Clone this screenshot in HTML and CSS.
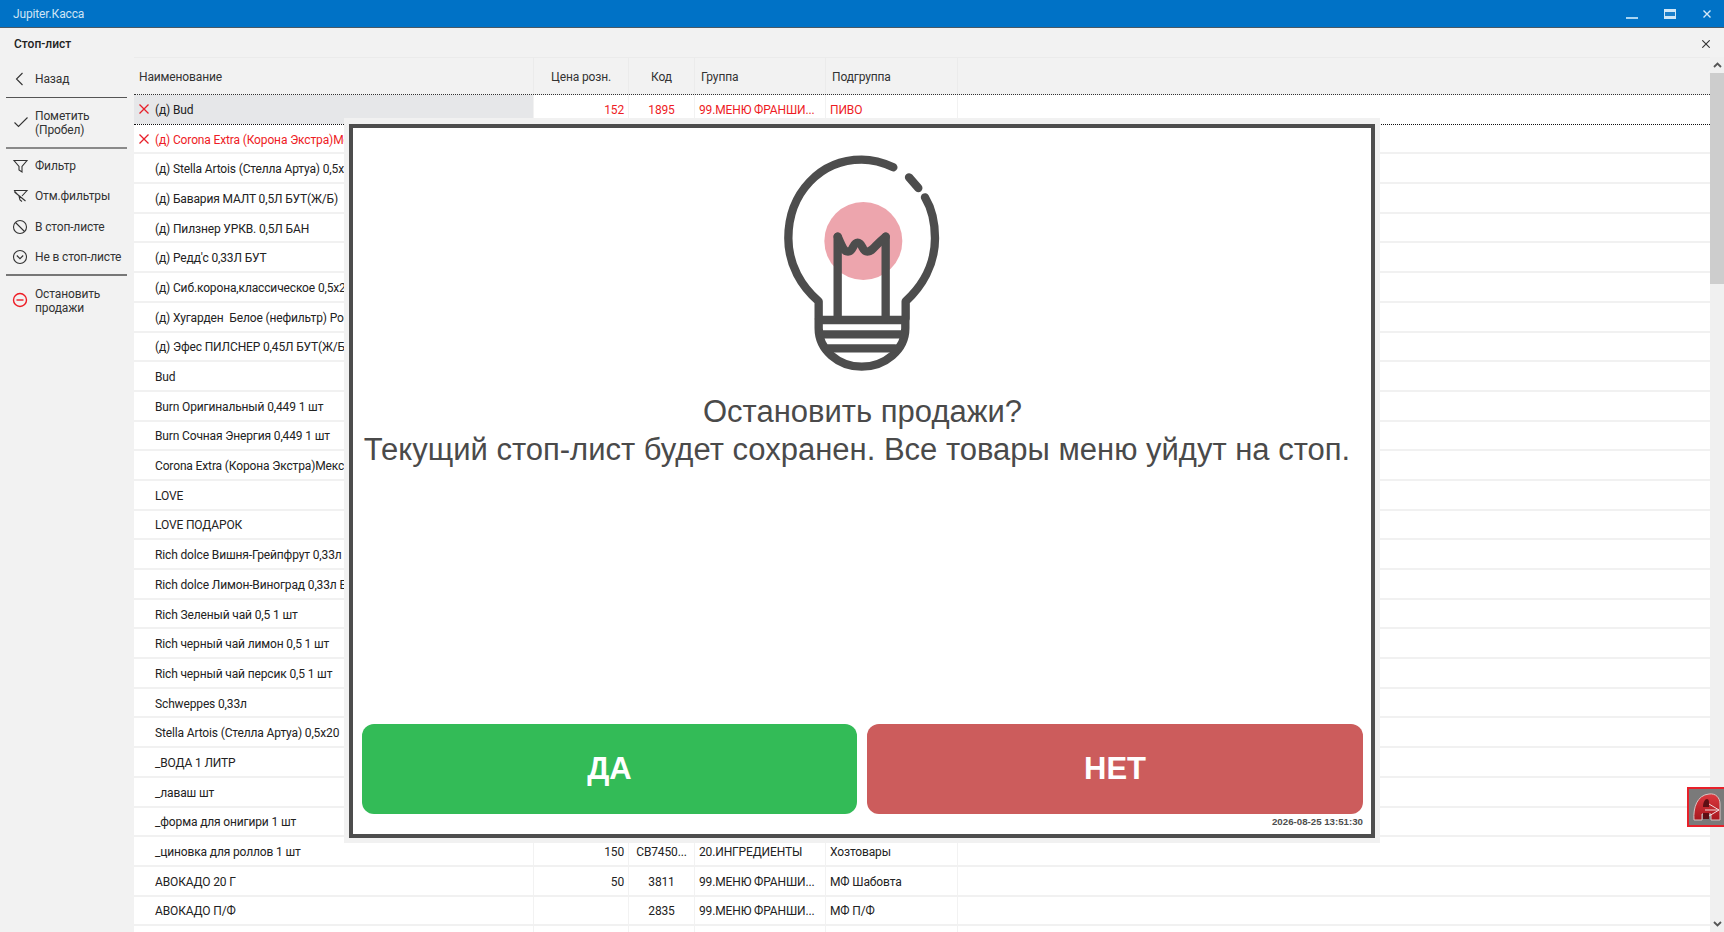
FILE: index.html
```html
<!DOCTYPE html>
<html lang="ru">
<head>
<meta charset="utf-8">
<title>Jupiter.Касса</title>
<link rel="stylesheet" href="styles.css">
</head>
<body>
<header class="titlebar">
  <span class="app-name">Jupiter.Касса</span>
  <div class="win-buttons">
    <svg class="win-min" width="12" height="2" viewBox="0 0 12 2"><rect width="12" height="2" fill="#a9d5f2"/></svg>
    <svg class="win-max" width="12" height="10" viewBox="0 0 12 10"><rect width="12" height="10" fill="#cfe6f7"/><rect x="1" y="3" width="10" height="4" fill="#1a7fcb"/></svg>
    <svg class="win-close" width="8" height="8" viewBox="0 0 8 8"><path d="M.5.5l7 7M7.5.5l-7 7" stroke="#d5e9f8" stroke-width="1.4"/></svg>
  </div>
</header>
<div class="subheader">
  <span class="sub-title">Стоп-лист</span>
  <svg width="8" height="8" viewBox="0 0 8 8"><path d="M.3.3l7.4 7.4M7.7.3L.3 7.7" stroke="#333" stroke-width="1.1"/></svg>
</div>
<div class="workspace">
  <nav class="sidebar">
    <div class="side-item back">
      <svg class="icon" viewBox="0 0 18 18"><path d="M11.5 3L5.5 9l6 6" class="ic"/></svg><span>Назад</span>
    </div>
    <hr class="side-div">
    <div class="side-item tall">
      <svg class="icon" viewBox="0 0 18 18"><path d="M3.5 8.500l4 4 9-9" class="ic"/></svg><span>Пометить<br>(Пробел)</span>
    </div>
    <hr class="side-div thick">
    <div class="side-item first">
      <svg class="icon" viewBox="0 0 18 18"><path d="M3 3.500h13l-5 6v5.500l-3-2v-3.500z" class="ic"/></svg><span>Фильтр</span>
    </div>
    <div class="side-item">
      <svg class="icon" viewBox="0 0 18 18"><path d="M3 3.500h13l-5 5.500M3 3.500l5 5.500 1 4 2 1.500M3.500 5l11 9" class="ic"/></svg><span>Отм.фильтры</span>
    </div>
    <div class="side-item">
      <svg class="icon" viewBox="0 0 18 18"><circle cx="9" cy="9" r="6.500" class="ic"/><path d="M4.500 4.500l9 9" class="ic"/></svg><span>В стоп-листе</span>
    </div>
    <div class="side-item">
      <svg class="icon" viewBox="0 0 18 18"><circle cx="9" cy="9" r="6.500" class="ic"/><path d="M5.800 7.500l3.200 3.200 3.200-3.200" class="ic"/></svg><span>Не в стоп-листе</span>
    </div>
    <hr class="side-div last">
    <div class="side-item tall">
      <svg class="icon" viewBox="0 0 18 18"><circle cx="9" cy="8" r="6.500" class="ic red"/><path d="M5.500 8h7" class="ic red"/></svg><span>Остановить<br>продажи</span>
    </div>
  </nav>
  <main class="grid">
    <div class="grid-head">
      <div class="h-name">Наименование</div>
      <div class="h-center">Цена розн.</div>
      <div class="h-center">Код</div>
      <div class="h-left">Группа</div>
      <div class="h-left">Подгруппа</div>
      <div></div>
    </div>
    <div class="row selected stopped">
      <div class="c-name sel"><svg class="x" viewBox="0 0 12 12"><path d="M1.500 1.500l9 9M10.500 1.500l-9 9"/></svg>(д) Bud</div>
      <div class="c-price">152</div><div class="c-code">1895</div><div class="c-text">99.МЕНЮ ФРАНШИ...</div><div class="c-text">ПИВО</div><div></div>
    </div>
    <div class="row stopped">
      <div class="c-name"><svg class="x" viewBox="0 0 12 12"><path d="M1.500 1.500l9 9M10.500 1.500l-9 9"/></svg>(д) Corona Extra (Корона Экстра)Мексика</div>
      <div></div><div></div><div></div><div></div><div></div>
    </div>
    <div class="row"><div class="c-name">(д) Stella Artois (Стелла Артуа) 0,5х20</div><div></div><div></div><div></div><div></div><div></div></div>
    <div class="row"><div class="c-name">(д) Бавария МАЛТ 0,5Л БУТ(Ж/Б)</div><div></div><div></div><div></div><div></div><div></div></div>
    <div class="row"><div class="c-name">(д) Пилзнер УРКВ. 0,5Л БАН</div><div></div><div></div><div></div><div></div><div></div></div>
    <div class="row"><div class="c-name">(д) Редд'с 0,33Л БУТ</div><div></div><div></div><div></div><div></div><div></div></div>
    <div class="row"><div class="c-name">(д) Сиб.корона,классическое 0,5х20</div><div></div><div></div><div></div><div></div><div></div></div>
    <div class="row"><div class="c-name">(д) Хугарден&nbsp; Белое (нефильтр) Россия</div><div></div><div></div><div></div><div></div><div></div></div>
    <div class="row"><div class="c-name">(д) Эфес ПИЛСНЕР 0,45Л БУТ(Ж/Б)</div><div></div><div></div><div></div><div></div><div></div></div>
    <div class="row"><div class="c-name">Bud</div><div></div><div></div><div></div><div></div><div></div></div>
    <div class="row"><div class="c-name">Burn Оригинальный 0,449 1 шт</div><div></div><div></div><div></div><div></div><div></div></div>
    <div class="row"><div class="c-name">Burn Сочная Энергия 0,449 1 шт</div><div></div><div></div><div></div><div></div><div></div></div>
    <div class="row"><div class="c-name">Corona Extra (Корона Экстра)Мексика</div><div></div><div></div><div></div><div></div><div></div></div>
    <div class="row"><div class="c-name">LOVE</div><div></div><div></div><div></div><div></div><div></div></div>
    <div class="row"><div class="c-name">LOVE ПОДАРОК</div><div></div><div></div><div></div><div></div><div></div></div>
    <div class="row"><div class="c-name">Rich dolce Вишня-Грейпфрут 0,33л</div><div></div><div></div><div></div><div></div><div></div></div>
    <div class="row"><div class="c-name">Rich dolce Лимон-Виноград 0,33л Б</div><div></div><div></div><div></div><div></div><div></div></div>
    <div class="row"><div class="c-name">Rich Зеленый чай 0,5 1 шт</div><div></div><div></div><div></div><div></div><div></div></div>
    <div class="row"><div class="c-name">Rich черный чай лимон 0,5 1 шт</div><div></div><div></div><div></div><div></div><div></div></div>
    <div class="row"><div class="c-name">Rich черный чай персик 0,5 1 шт</div><div></div><div></div><div></div><div></div><div></div></div>
    <div class="row"><div class="c-name">Schweppes 0,33л</div><div></div><div></div><div></div><div></div><div></div></div>
    <div class="row"><div class="c-name">Stella Artois (Стелла Артуа) 0,5х20</div><div></div><div></div><div></div><div></div><div></div></div>
    <div class="row"><div class="c-name">_ВОДА 1 ЛИТР</div><div></div><div></div><div></div><div></div><div></div></div>
    <div class="row"><div class="c-name">_лаваш шт</div><div></div><div></div><div></div><div></div><div></div></div>
    <div class="row"><div class="c-name">_форма для онигири 1 шт</div><div></div><div></div><div></div><div></div><div></div></div>
    <div class="row"><div class="c-name">_циновка для роллов 1 шт</div><div class="c-price">150</div><div class="c-code">СВ7450...</div><div class="c-text">20.ИНГРЕДИЕНТЫ</div><div class="c-text">Хозтовары</div><div></div></div>
    <div class="row"><div class="c-name">АВОКАДО 20 Г</div><div class="c-price">50</div><div class="c-code">3811</div><div class="c-text">99.МЕНЮ ФРАНШИ...</div><div class="c-text">МФ Шабовта</div><div></div></div>
    <div class="row"><div class="c-name">АВОКАДО П/Ф</div><div class="c-price"></div><div class="c-code">2835</div><div class="c-text">99.МЕНЮ ФРАНШИ...</div><div class="c-text">МФ П/Ф</div><div></div></div>
    <div class="row"><div class="c-name"></div><div></div><div></div><div></div><div></div><div></div></div>
  </main>
  <aside class="scrollbar">
    <div class="scroll-btn up"><svg width="9" height="6" viewBox="0 0 9 6"><path d="M1 5l3.500-3.500L8 5" fill="none" stroke="#555" stroke-width="1.800"/></svg></div>
    <div class="scroll-thumb"></div>
    <div class="scroll-rest"></div>
    <div class="scroll-btn down"><svg width="9" height="6" viewBox="0 0 9 6"><path d="M1 1l3.500 3.500L8 1" fill="none" stroke="#555" stroke-width="1.800"/></svg></div>
  </aside>
</div>

<div class="modal">
  <div class="modal-inner">
    <svg class="bulb" viewBox="9 0 600 720" width="200" height="240">
      <circle cx="310" cy="303" r="117" fill="#eda5ad"/>
      <g fill="none" stroke="#4d4d4d" stroke-width="25" stroke-linecap="round" stroke-linejoin="round">
        <path d="M400 82C370 68 340 59 305 59C183 59 85 157 85 295C85 375 125 440 176 484V535"/>
        <path d="M495 172C515 205 525 250 525 295C525 375 485 440 437 484V535"/>
        <path d="M447 112L475 144"/>
        <path d="M176 540H436V565C436 630 375 680 305 680C235 680 176 630 176 565Z"/>
        <path d="M186 583H426M205 625H405"/>
        <path d="M233 290V535M377 290V535"/>
        <path d="M233 290C245 315 250 335 264 335C280 335 278 308 293 308C308 308 306 335 322 335C338 335 345 315 377 290"/>
      </g>
    </svg>
    <p class="msg">Остановить продажи?<span class="msg-detail">Текущий стоп-лист будет сохранен. Все товары меню уйдут на стоп.</span></p>
    <div class="actions">
      <div class="btn yes">ДА</div>
      <div class="btn no">НЕТ</div>
    </div>
    <div class="stamp">2026-08-25 13:51:30</div>
  </div>
</div>

<div class="badge">
  <svg viewBox="0 0 28 28" width="28" height="28">
    <defs>
      <linearGradient id="ammyy" x1="0" y1="0" x2="0" y2="1">
        <stop offset="0" stop-color="#dc3a40"/>
        <stop offset="1" stop-color="#a8181e"/>
      </linearGradient>
    </defs>
    <path d="M1 27C0 15 4 2 16 1C23 0 27 5 27 11V27H18V21H9V27Z" fill="url(#ammyy)" stroke="#d8c4c4" stroke-width="1"/>
    <path d="M10 14C10 9 12 6 14 6C16 6 16 9 16 11V14Z" fill="#5e0f14"/>
    <path d="M10 20H16V26H10Z" fill="#5e0f14"/>
    <path d="M12 17H26M16 11L26 17L16 23" fill="none" stroke="#f2dede" stroke-width="1"/>
  </svg>
</div>
</body>
</html>
```

FILE: styles.css
```css
* { box-sizing: border-box; }
html, body { height: 100%; }
body {
  margin: 0;
  width: 1724px;
  height: 932px;
  overflow: hidden;
  position: relative;
  display: flex;
  flex-direction: column;
  background: #f2f2f2;
  font-family: Roboto, "Liberation Sans", sans-serif;
  font-size: 12px;
  letter-spacing: -0.14px;
  color: #222;
}
.titlebar {
  height: 28px;
  flex: none;
  background: #0072c6;
  border-bottom: 1px solid #4a5a66;
  display: flex;
  align-items: center;
  justify-content: space-between;
  padding: 0 13px;
}
.app-name { color: #cfe4f5; }
.win-buttons { display: flex; align-items: center; gap: 26px; }
.win-min { margin-top: 9px; }
.win-close { margin-left: 1px; }
.subheader {
  height: 29px;
  flex: none;
  display: flex;
  align-items: center;
  justify-content: space-between;
  padding: 2px 14px 0 14px;
}
.sub-title { font-weight: 500; color: #222; letter-spacing: 0; }
.workspace { flex: 1; display: flex; min-height: 0; }
.sidebar { width: 134px; flex: none; display: flex; flex-direction: column; }
.side-div {
  margin: 0 7px 0 6px;
  border: 0;
  height: 1px;
  background: #555;
  flex: none;
}
.side-div.thick { height: 2px; background: #8a8a8a; }
.side-div.last { height: 2px; background: #777; margin-top: 1px; }
.side-item {
  display: flex;
  align-items: center;
  gap: 6px;
  padding-left: 11px;
  height: 30.5px;
  line-height: 14px;
  flex: none;
  color: #333;
}
.side-item.back { height: 39.5px; padding-top: 4px; }
.side-item.tall { height: 49px; padding-top: 1px; }
.side-item.first { margin-top: 2px; }
.icon { width: 18px; height: 18px; flex: none; }
.ic { fill: none; stroke: #333; stroke-width: 1.1; }
.ic.red { stroke: #ee1c25; stroke-width: 1.4; }
.grid { flex: 1; min-width: 0; background: #fff; border-top: 1px solid #ebebeb; }
.grid-head, .row {
  display: grid;
  grid-template-columns: 400px 95px 66px 131px 132px 1fr;
}
.grid-head {
  height: 37px;
  background: #f2f2f2;
  border-bottom: 1px dotted #333;
  align-items: stretch;
}
.grid-head > div { display: flex; align-items: center; padding-top: 2px; border-right: 1px solid #ebebeb; color: #333; }
.grid-head > div:last-child { border-right: 0; }
.h-name { padding-left: 5px; }
.h-center { justify-content: center; }
.h-left { padding-left: 6px; }
.row {
  height: 29.7px;
  background: #fff;
  border-bottom: 2px solid #f1f1f1;
}
.row > div {
  display: flex;
  align-items: center;
  padding-top: 2px;
  border-right: 1px solid #f2f2f2;
  white-space: nowrap;
  overflow: hidden;
}
.row > div:last-child { border-right: 0; }
.row > .c-name { padding-left: 21px; position: relative; }
.c-price { justify-content: flex-end; padding-right: 4px; }
.c-code { justify-content: center; }
.row > .c-text { padding-left: 4px; }
.selected { border-bottom: 1px dotted #111; }
.stopped > div { color: #ee1c25; }
.selected .c-name { color: #222; }
.sel { background: #e6e7e9; }
.x {
  position: absolute;
  left: 4px;
  top: 50%;
  width: 12px;
  height: 12px;
  margin-top: -6px;
  fill: none;
  stroke: #e8202a;
  stroke-width: 1.300;
}
.scrollbar { width: 14px; flex: none; display: flex; flex-direction: column; background: #f0f0f0; }
.scroll-btn { height: 16px; display: flex; align-items: center; justify-content: center; flex: none; }
.scroll-thumb { height: 211px; background: #cdcdcd; flex: none; }
.scroll-rest { flex: 1; }
.modal {
  position: absolute;
  left: 344px;
  top: 118px;
  width: 1036px;
  height: 725px;
  padding: 6px 5px 5px 5px;
  background: #f1f1f1;
  letter-spacing: 0;
}
.modal-inner {
  height: 100%;
  background: #fff;
  border: 4px solid #4d4d4d;
  display: flex;
  flex-direction: column;
  padding: 12px 8px 0 9px;
}
.bulb { display: block; margin: 0 auto; flex: none; }
.msg {
  margin: 13px 0 0;
  text-align: center;
  font-family: "Liberation Sans", Arial, sans-serif;
  font-size: 31px;
  line-height: 38px;
  color: #4a4a4a;
  white-space: nowrap;
}
.msg-detail { display: block; padding-right: 11px; }
.actions { margin-top: auto; display: flex; gap: 10px; height: 90px; flex: none; }
.btn {
  flex: 1;
  border-radius: 12px;
  display: flex;
  align-items: center;
  justify-content: center;
  font-family: "Liberation Sans", Arial, sans-serif;
  font-weight: 700;
  font-size: 31px;
  color: #fff;
}
.yes { flex: 0 0 495px; background: #33bb57; }
.no { background: #cc5c5c; }
.stamp {
  height: 20px;
  line-height: 16px;
  text-align: right;
  font-family: "Liberation Sans", Arial, sans-serif;
  font-weight: 700;
  font-size: 9.700px;
  color: #4d4d4d;
}
.badge {
  position: absolute;
  left: 1687px;
  top: 787px;
  width: 37px;
  height: 40px;
  background: #7a7a7a;
  border: 2px solid #e8202a;
  border-right: 0;
  display: flex;
  align-items: center;
  padding-left: 4px;
}
```
